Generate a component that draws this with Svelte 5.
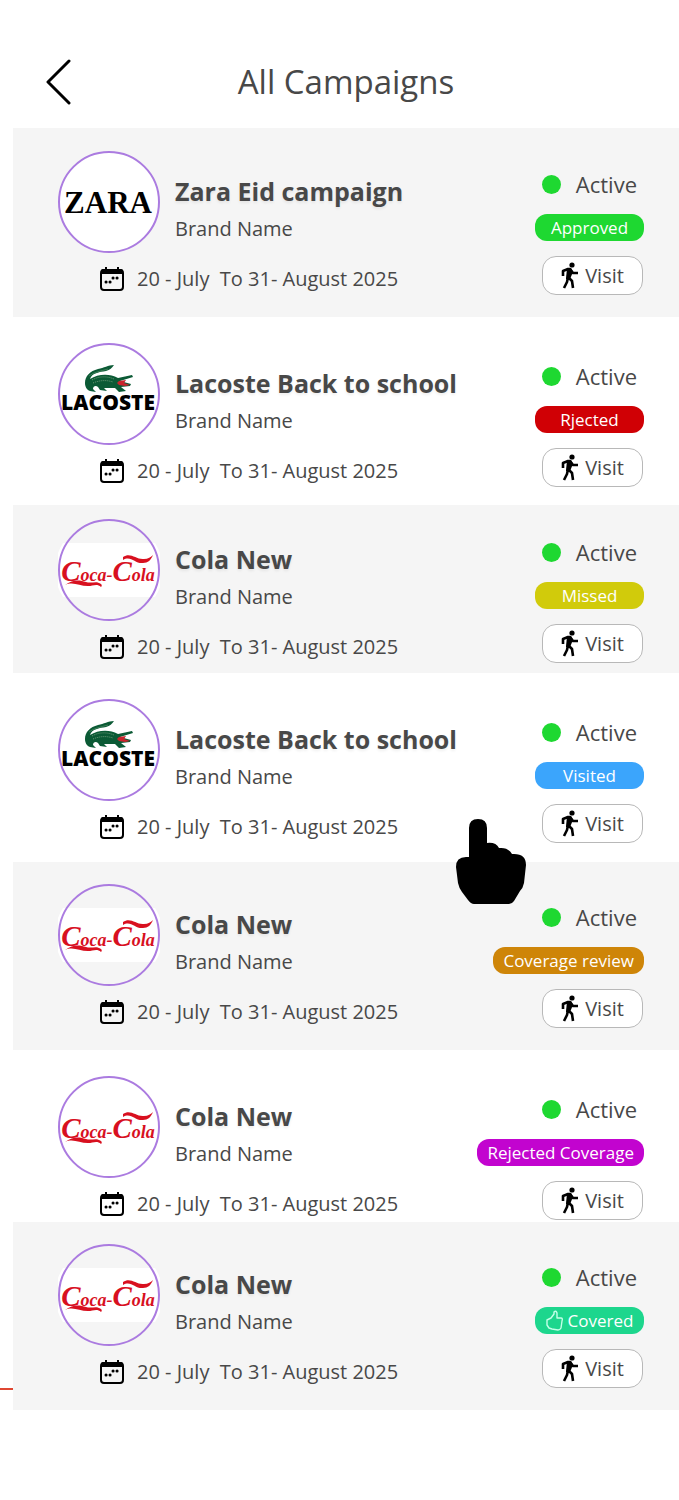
<script lang="ts">
    type Brand = 'zara' | 'lacoste' | 'cola';

    interface Campaign {
        title: string;
        brand: Brand;
        status: string;
        tone: string;
        top: number;
        bottom: number;
    }

    const campaigns: Campaign[] = [
        { title: 'Zara Eid campaign', brand: 'zara', status: 'Approved', tone: 'approved', top: 23, bottom: 22 },
        { title: 'Lacoste Back to school', brand: 'lacoste', status: 'Rjected', tone: 'rejected', top: 26, bottom: 18 },
        { title: 'Cola New', brand: 'cola', status: 'Missed', tone: 'missed', top: 14, bottom: 10 },
        { title: 'Lacoste Back to school', brand: 'lacoste', status: 'Visited', tone: 'visited', top: 26, bottom: 19 },
        { title: 'Cola New', brand: 'cola', status: 'Coverage review', tone: 'review', top: 22, bottom: 22 },
        { title: 'Cola New', brand: 'cola', status: 'Rejected Coverage', tone: 'rejected-coverage', top: 26, bottom: 2 },
        { title: 'Cola New', brand: 'cola', status: 'Covered', tone: 'covered', top: 22, bottom: 22 }
    ];

    const dates = '20 - July  To 31- August 2025';
</script>

{#snippet logo(brand: Brand)}
    <svg class="logo" viewBox="0 0 102 102" role="img" aria-label={brand}>
        {#if brand === 'zara'}
            <circle cx="51" cy="51" r="50" fill="#fff" />
            <text x="50" y="62" class="zara">ZARA</text>
        {:else if brand === 'lacoste'}
            <circle cx="51" cy="51" r="50" fill="#fff" />
            <path
                d="M56 22C50 22 46 25 40 26C32 28 27 33 27 40C27 44 29 47 32 48L38 49L35 46C35 43 38 42 40 44L42 47L49 48L46 45L57 45L61 49L68 48L63 44L72 43L73 41L62 38L75 34L74 32L60 35C51 30 40 31 32 36C34 30 41 29 48 28C52 27 54 25 56 22Z"
                fill="#0b5a35"
            />
            <path d="M61 38L68 37L66 40L72 42L67 43L61 42L59 40Z" fill="#c9242c" />
            <path
                d="M34 37C41 33 49 33 56 36M35 40C42 37 49 37 55 39"
                fill="none"
                stroke="#6c9a78"
                stroke-dasharray="1 1"
            />
            <path d="M31 33C36 29 43 28 50 26" fill="none" stroke="#3c7d57" />
            <text x="50" y="67" class="lacoste">LACOSTE</text>
        {:else}
            <path d="M5 24H97A50 50 0 0 1 97 78H5A50 50 0 0 1 5 24Z" fill="#fff" />
            <text x="50" y="62" class="cola"><tspan class="cap">C</tspan>oca-<tspan class="cap">C</tspan>ola</text>
            <path
                d="M7 66C15 60 22 61 28 63C34 65 38 61 43 65C44 66 44 67 43 68C39 64 35 67 30 67C21 67 15 62 7 66Z"
                fill="#d8101f"
            />
            <path
                d="M65 38C73 33 78 41 86 40C90 40 93 38 95 36C93 41 90 44 85 44C77 45 73 36 65 41Z"
                fill="#d8101f"
            />
        {/if}
        <circle cx="51" cy="51" r="50" fill="none" stroke="#ab7be0" stroke-width="2" />
    </svg>
{/snippet}

<main>
    <header>
        <button class="back" aria-label="Back">
            <svg width="26" height="46" viewBox="0 0 26 46">
                <path d="M23 2L2 23L23 44" fill="none" stroke="#000" stroke-width="3" stroke-linecap="round" stroke-linejoin="round" />
            </svg>
        </button>
        <h1>All Campaigns</h1>
    </header>

    <ul>
        {#each campaigns as campaign, i}
            <li style="padding-top: {campaign.top}px; padding-bottom: {campaign.bottom}px">
                <div class="info">
                    <div class="brand">
                        {@render logo(campaign.brand)}
                        <div class="names">
                            <h2>{campaign.title}</h2>
                            <p>Brand Name</p>
                        </div>
                    </div>
                    <div class="dates">
                        <svg width="24" height="24" viewBox="0 0 24 24">
                            <rect x="1" y="3" width="22" height="20" rx="3" fill="none" stroke="#000" stroke-width="2" />
                            <path d="M1 7V4Q1 2 3 2H21Q23 2 23 4V7ZM5 0H7V3H5ZM17 0H19V3H17Z" />
                            <path d="M6 15h.1M10 15h.1M13 11h.1M17 11h.1" stroke="#000" stroke-width="3" stroke-linecap="round" />
                        </svg>
                        <span>{dates}</span>
                    </div>
                </div>

                <div class="side">
                    <div class="active"><i></i>Active</div>
                    <div class="badge {campaign.tone}">
                        {#if campaign.tone === 'covered'}
                            <svg width="18" height="21" viewBox="0 0 18 21">
                                <path
                                    d="M1 10L5 8L8 4L8 2Q10 0 11 3L11 8H15Q17 8 16 11L15 18Q14 20 12 20L6 19L3 18L1 15Z"
                                    fill="none"
                                    stroke="#c4ffe8"
                                    stroke-width="1.4"
                                    stroke-linejoin="round"
                                />
                            </svg>
                        {/if}
                        {campaign.status}
                    </div>
                    <button class="visit">
                        <svg width="18" height="27" viewBox="0 0 18 27">
                            <circle cx="11" cy="3" r="2.600" />
                            <path
                                d="M2 14V9L7 7L9 7L12 11H17M8 7L7 15L11 19L12 26M7 15L6 20L3 26"
                                fill="none"
                                stroke="#000"
                                stroke-width="2.600"
                                stroke-linejoin="round"
                            />
                            <path d="M6 6H10L12 10L9 17H5Z" />
                        </svg>
                        Visit
                    </button>
                </div>

                {#if i === 3}
                    <svg class="pointer" width="70" height="85" viewBox="0 0 70 85">
                        <path
                            d="M13 38V9Q13 0 22 0Q31 0 31 9V24Q40 23 43 29Q52 28 56 35Q70 34 70 46L68 64Q67 69 64 72L58 82Q56 85 53 85H18Q15 85 12 81L6 73Q3 69 2 64L0 48Q0 38 10 38Z"
                        />
                    </svg>
                {/if}
                {#if i === campaigns.length - 1}
                    <span class="marker"></span>
                {/if}
            </li>
        {/each}
    </ul>
</main>

<style>
    :global(body) {
        margin: 0;
        background: #fff;
    }

    main {
        padding-left: 13px;
        font-family: 'Open Sans', sans-serif;
        color: #484848;
    }

    header {
        display: grid;
        grid-template-columns: 1fr auto 1fr;
        align-items: center;
        padding: 59px 0 23px;
    }

    h1,
    h2,
    p,
    ul {
        margin: 0;
        padding: 0;
    }

    h1 {
        font-size: 33px;
        font-weight: 400;
        line-height: 40px;
    }

    .back {
        justify-self: start;
        margin-left: 33px;
        padding: 0;
        border: 0;
        background: none;
        cursor: pointer;
    }

    svg {
        display: block;
        flex: none;
    }

    ul {
        list-style: none;
    }

    li {
        position: relative;
        display: flex;
        justify-content: space-between;
        padding-left: 45px;
        padding-right: 35px;
    }

    li:nth-child(odd) {
        background: #f5f5f5;
    }

    .brand {
        display: flex;
        gap: 15px;
    }

    .logo {
        width: 102px;
        height: 102px;
    }

    .logo text {
        text-anchor: middle;
    }

    .zara {
        font: 700 31px 'Liberation Serif', serif;
    }

    .lacoste {
        font: 800 21px 'Open Sans', sans-serif;
    }

    .cola {
        font: italic 700 18px 'Liberation Serif', serif;
        fill: #d8101f;
    }

    .cola .cap {
        font-size: 29px;
    }

    .names {
        padding-top: 22px;
    }

    h2 {
        font-size: 25px;
        font-weight: 700;
        line-height: 36px;
        text-shadow: 0 2px 3px #0001;
    }

    p {
        font-size: 20px;
        line-height: 40px;
    }

    .dates {
        display: flex;
        align-items: center;
        gap: 13px;
        margin-top: 10px;
        padding-left: 42px;
        font-size: 20px;
        line-height: 32px;
        white-space: pre;
    }

    .side {
        display: flex;
        flex-direction: column;
        align-items: flex-end;
    }

    .active {
        display: flex;
        align-items: center;
        gap: 15px;
        margin: 17px 7px 14px 0;
        font-size: 22px;
        line-height: 32px;
    }

    .active i {
        width: 19px;
        height: 19px;
        border-radius: 50%;
        background: #1ed831;
    }

    .badge {
        display: flex;
        align-items: center;
        justify-content: center;
        gap: 4px;
        box-sizing: border-box;
        min-width: 109px;
        height: 27px;
        padding: 0 10px;
        border-radius: 12px;
        color: #fff;
        font-size: 17px;
        line-height: 27px;
    }

    .approved {
        background: #1ed831;
    }

    .rejected {
        background: #d00005;
    }

    .missed {
        background: #d1cb0b;
    }

    .visited {
        background: #3ba5fc;
    }

    .review {
        background: #ce8508;
    }

    .rejected-coverage {
        background: #c204cf;
    }

    .covered {
        background: #1dd68d;
    }

    .visit {
        display: flex;
        align-items: center;
        justify-content: center;
        gap: 6px;
        box-sizing: border-box;
        width: 101px;
        height: 39px;
        margin: 15px 1px 0 0;
        padding: 0;
        border: 1px solid #b8b8b8;
        border-radius: 14px;
        background: #fff;
        color: inherit;
        font: inherit;
        font-size: 20px;
        cursor: pointer;
    }

    .pointer {
        position: absolute;
        z-index: 1;
        right: 153px;
        bottom: -42px;
    }

    .marker {
        position: absolute;
        left: -13px;
        bottom: 20px;
        width: 13px;
        height: 2px;
        background: #df4732;
    }
</style>
